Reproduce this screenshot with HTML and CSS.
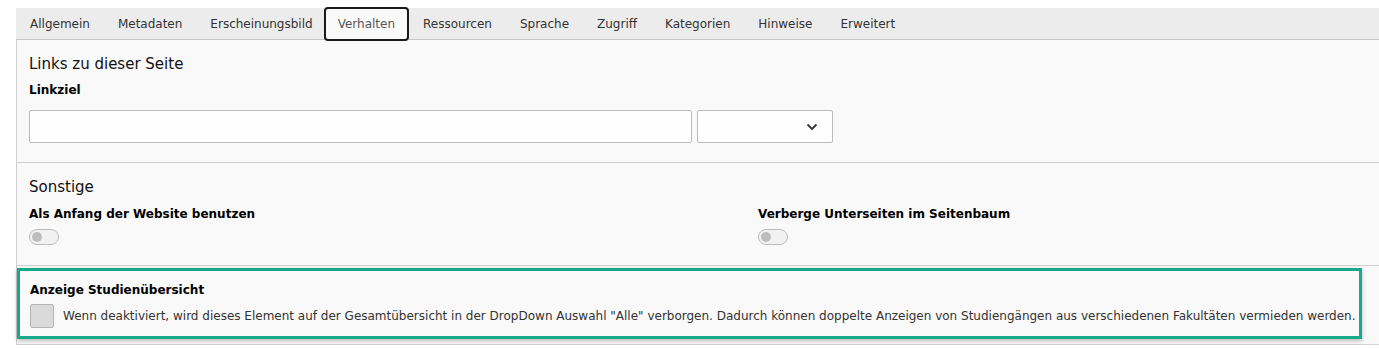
FILE: index.html
```html
<!DOCTYPE html>
<html lang="de">
<head>
<meta charset="utf-8">
<title>Seiteneigenschaften</title>
<link rel="stylesheet" href="styles.css">
</head>
<body>
<div class="editor">
  <nav class="tabs">
    <span class="tab">Allgemein</span>
    <span class="tab">Metadaten</span>
    <span class="tab">Erscheinungsbild</span>
    <span class="tab active">Verhalten</span>
    <span class="tab">Ressourcen</span>
    <span class="tab">Sprache</span>
    <span class="tab">Zugriff</span>
    <span class="tab">Kategorien</span>
    <span class="tab">Hinweise</span>
    <span class="tab">Erweitert</span>
  </nav>
  <div class="panel">
    <section class="group group-links">
      <h2 class="group-title">Links zu dieser Seite</h2>
      <div class="field-label">Linkziel</div>
      <div class="link-row">
        <input class="text-input" type="text">
        <div class="select">
          <svg class="chevron" width="12" height="8" viewBox="0 0 12 8"><path d="M1.5 1.5 L6 6 L10.5 1.5" fill="none" stroke="#333" stroke-width="1.8"/></svg>
        </div>
      </div>
    </section>
    <section class="group group-other">
      <h2 class="group-title">Sonstige</h2>
      <div class="two-col">
        <div class="col">
          <div class="field-label">Als Anfang der Website benutzen</div>
          <span class="toggle"><span class="knob"></span></span>
        </div>
        <div class="col">
          <div class="field-label">Verberge Unterseiten im Seitenbaum</div>
          <span class="toggle"><span class="knob"></span></span>
        </div>
      </div>
    </section>
    <section class="highlight">
      <div class="field-label">Anzeige Studienübersicht</div>
      <div class="check-row">
        <span class="checkbox"></span>
        <span class="check-text">Wenn deaktiviert, wird dieses Element auf der Gesamtübersicht in der DropDown Auswahl "Alle" verborgen. Dadurch können doppelte Anzeigen von Studiengängen aus verschiedenen Fakultäten vermieden werden.</span>
      </div>
    </section>
  </div>
</div>
</body>
</html>
```

FILE: styles.css
```css
html, body {
  margin: 0;
  padding: 0;
  background: #ffffff;
}
body {
  font-family: "DejaVu Sans", Verdana, sans-serif;
  font-size: 12px;
  color: #212121;
}
.editor {
  padding: 8px 0 0 16px;
}
.tabs {
  display: flex;
  align-items: stretch;
  height: 31px;
  background: #ececec;
  border-bottom: 1px solid #c6c6c6;
}
.tab {
  display: flex;
  align-items: center;
  padding: 0 12px;
  border: 2px solid transparent;
  color: #333;
  font-size: 12px;
}
.tab.active {
  margin: -1px 0 -2px -3px;
  background: #fafafa;
  border-color: #1a1a1a;
  border-radius: 4px;
  color: #555;
}
.panel {
  background: #f9f9f9;
  border-left: 1px solid #cfcfcf;
  border-bottom: 1px solid #d4d4d4;
}
.group {
  padding: 0 12px;
  border-bottom: 1px solid #cfcfcf;
}
.group-links {
  padding-top: 15px;
  padding-bottom: 19px;
}
.group-links .field-label {
  margin-top: 9px;
}
.group-other {
  padding-top: 15px;
  padding-bottom: 20px;
}
.group-other .field-label {
  margin-top: 10px;
}
.group-title {
  margin: 0;
  font-size: 15px;
  font-weight: normal;
  line-height: 18px;
  color: #111;
}
.field-label {
  margin-top: 8px;
  font-weight: bold;
  line-height: 16px;
  color: #000;
}
.link-row {
  display: flex;
  gap: 5px;
  margin-top: 12px;
}
.text-input {
  box-sizing: border-box;
  width: 663px;
  height: 33px;
  margin: 0;
  border: 1px solid #bbbbbb;
  border-radius: 2px;
  background: #fefefe;
}
.select {
  box-sizing: border-box;
  width: 136px;
  height: 33px;
  border: 1px solid #bbbbbb;
  border-radius: 2px;
  background: #fefefe;
  display: flex;
  align-items: center;
  justify-content: flex-end;
  padding-right: 14px;
}
.two-col {
  display: grid;
  grid-template-columns: 729px 1fr;
}
.toggle {
  display: block;
  box-sizing: border-box;
  width: 30px;
  height: 16px;
  margin-top: 7px;
  border: 1px solid #bdbdbd;
  border-radius: 8px;
  background: #f1f1f1;
  position: relative;
}
.knob {
  position: absolute;
  left: 2px;
  top: 2px;
  width: 10px;
  height: 10px;
  border-radius: 50%;
  background: #bdbdbd;
}
.highlight {
  margin: 2px 17px 5px 0;
  padding: 7px 9px 8px 10px;
  border: 3px solid #16a98a;
  box-shadow: 0 2px 4px rgba(0,0,0,0.25);
  background: #f9f9f9;
}
.highlight .field-label {
  margin-top: 4px;
}
.check-row {
  display: flex;
  align-items: center;
  gap: 9px;
  margin-top: 6px;
}
.checkbox {
  box-sizing: border-box;
  width: 24px;
  height: 24px;
  border: 1px solid #b5b5b5;
  border-radius: 2px;
  background: #dadada;
  flex: none;
}
.check-text {
  color: #333;
  white-space: nowrap;
}
```
